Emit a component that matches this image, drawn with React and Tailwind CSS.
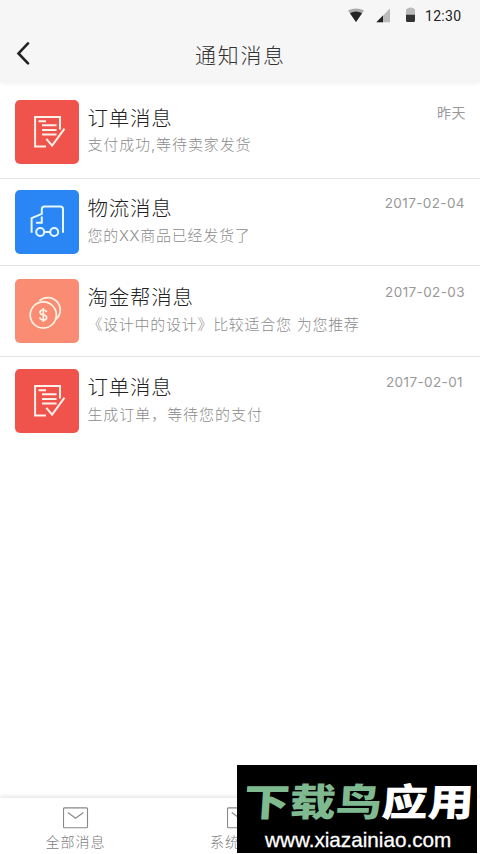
import React from 'react';

function OrderIcon() {
  return (
    <svg className="size-16" viewBox="0 0 64 64" fill="none" stroke="#fff0ea" strokeWidth="2">
      <path d="M31 46.5H20.1V17H45V29.5" />
      <path d="M23.5 21.2H31M27 25.3H41.5M27 30H41.5M27 34.6H41.5" />
      <path d="M31.3 38.8L37.1 45.7L49.5 28.6" />
    </svg>
  );
}

function TruckIcon() {
  return (
    <svg className="size-16" viewBox="0 0 64 64" fill="none" stroke="#e6f8ff" strokeWidth="2">
      <path d="M16.6 42.8V28.2L26.8 23.8V19.2Q26.8 16.6 29.4 16.6H45.4Q48 16.6 48 19.2V42.8" />
      <path d="M26.8 26.5V32.7H21" />
      <circle cx="25.2" cy="42" r="4" />
      <circle cx="39.2" cy="42" r="4" />
      <path d="M29.4 42H35.2" />
    </svg>
  );
}

function CoinsIcon() {
  return (
    <svg className="size-16" viewBox="0 0 64 64" fill="none" stroke="#fff3e4" strokeWidth="1.7">
      <circle cx="28.3" cy="36" r="13.1" />
      <path d="M24.4 21.9A12.4 12.4 0 1 1 41.2 40.2" />
      <path d="M31.6 33.2C31.3 31.3 29.8 31 28.3 31C26.3 31 25 31.9 25 33.5C25 37 31.7 34.8 31.7 38.4C31.7 40 30.3 41 28.3 41C26.3 41 24.9 40.2 24.8 38.3M28.3 29V43" strokeWidth="1.6" />
    </svg>
  );
}

const rows = [
  { Icon: OrderIcon, color: 'bg-[#f0534c]', title: '订单消息', text: '支付成功,等待卖家发货', date: '昨天', box: 'h-[93px] pt-[14px] pr-[14px]', dateStyle: 'text-[14px] tracking-[0.5px]', textStyle: 'tracking-[0.9px] -mt-px' },
  { Icon: TruckIcon, color: 'bg-[#2a86f5]', title: '物流消息', text: '您的XX商品已经发货了', date: '2017-02-04', box: 'h-[87px] pt-[11px] pr-[15px]', dateStyle: 'text-[13.5px] tracking-[0.4px]', textStyle: 'tracking-[0.75px]' },
  { Icon: CoinsIcon, color: 'bg-[#f98c72]', title: '淘金帮消息', text: '《设计中的设计》比较适合您 为您推荐', date: '2017-02-03', box: 'h-[91px] pt-[13px] pr-[15px]', dateStyle: 'text-[13.5px] tracking-[0.4px]', textStyle: 'tracking-[0.72px]' },
  { Icon: OrderIcon, color: 'bg-[#f0534c]', title: '订单消息', text: '生成订单，等待您的支付', date: '2017-02-01', box: 'h-[91px] pt-[12px] pr-[17px] border-transparent', dateStyle: 'text-[13.5px] tracking-[0.4px]', textStyle: 'tracking-[0.95px]' },
];

function MessageRow({ Icon, color, title, text, date, box, dateStyle, textStyle }) {
  return (
    <div className={`flex items-start border-b border-[#e4e4e4] pl-[15px] ${box}`}>
      <div className={`size-16 shrink-0 rounded-[5px] ${color}`}><Icon /></div>
      <div className="ml-[8.4px] flex-1 whitespace-nowrap">
        <div className="mt-[4px] h-[30px] text-[20.5px] leading-[29px] tracking-[0.8px] text-[#222]">{title}</div>
        <div className={`h-[24px] text-[15px] leading-[24px] text-[#8c8c8c] ${textStyle}`}>{text}</div>
      </div>
      <div className={`mt-[3px] whitespace-nowrap leading-5 font-normal text-[#999] ${dateStyle}`}>{date}</div>
    </div>
  );
}

function MailIcon() {
  return (
    <svg className="h-[22px] w-[26px]" viewBox="0 0 26 22" fill="none" stroke="#888" strokeWidth="1.1">
      <rect x="0.5" y="0.9" width="24" height="19.8" rx="1" />
      <path d="M4.8 5.5L12.6 11.2L20.4 5.5" />
    </svg>
  );
}

export default function App() {
  return (
    <div className="relative flex h-[854px] w-[480px] flex-col overflow-hidden bg-white font-['Inter','Noto_Sans_CJK_SC',sans-serif] font-light">
      <header className="h-[82px] shrink-0 bg-[#f6f6f6] shadow-[0_1px_5px_rgba(0,0,0,0.07)]">
        <div className="flex h-[32px] items-center pl-[348px]">
          <svg className="h-[32px] w-[70px]" viewBox="0 0 70 32">
            <path d="M0 10.5Q8 6.5 16 10.5L8 22Z" fill="#aaa" />
            <path d="M2 13.2Q8 9.8 14 13.2L8 22Z" fill="#222" />
            <path d="M28.3 22.2H42V8.5Z" fill="#bbb" />
            <path d="M28.3 22.2H35V15.5Z" fill="#222" />
            <path d="M58 15V10Q58 9 59 8.8L60 8Q62.5 6.8 65 8L66 8.8Q67 9 67 10V15Z" fill="#bbb" />
            <path d="M58 14.8H67V20.5Q67 22 65.5 22H59.5Q58 22 58 20.5Z" fill="#333" />
          </svg>
          <span className="ml-[7px] font-['Roboto',sans-serif] text-[14px] font-normal tracking-[0.3px] text-[#222]">12:30</span>
        </div>
        <div className="flex h-[46px] items-center">
          <svg className="ml-[15px] h-[26px] w-[16px]" viewBox="0 0 16 26" fill="none" stroke="#222" strokeWidth="2.6">
            <path d="M13 1.4L3.5 11.4L13 21.4" strokeLinecap="round" />
          </svg>
          <h1 className="mt-[2px] ml-[164px] text-[21px] leading-8 font-light tracking-[1.7px] text-[#333]">通知消息</h1>
        </div>
      </header>
      <main className="flex-1 pt-1">
        {rows.map((row) => <MessageRow key={row.date} {...row} />)}
      </main>
      <nav className="flex h-[56px] shrink-0 bg-white text-[14px] leading-5 tracking-[1px] text-[#7c7c7c] shadow-[0_-1px_5px_rgba(0,0,0,0.13)]">
        <div className="flex w-[151px] flex-col items-center pt-[9px]"><MailIcon /><span className="mt-[3px]">全部消息</span></div>
        <div className="flex w-[178px] flex-col items-center pt-[9px]"><MailIcon /><span className="mt-[3px]">系统消息</span></div>
      </nav>
      <div className="absolute top-[765px] left-[237px] h-[88px] w-[240px] overflow-hidden bg-black">
        <div className="absolute top-[13px] left-[7px] origin-left scale-x-[1.21] -skew-x-3 text-[38px] leading-[48px] font-black whitespace-nowrap text-white">
          <span className="text-[#7fb98f]">下载鸟</span>应用
        </div>
        <div className="absolute top-[63px] left-[28px] font-['Liberation_Sans',sans-serif] text-[20.7px] leading-6 font-normal text-white [-webkit-text-stroke:0.3px_white]">www.xiazainiao.com</div>
      </div>
    </div>
  );
}
